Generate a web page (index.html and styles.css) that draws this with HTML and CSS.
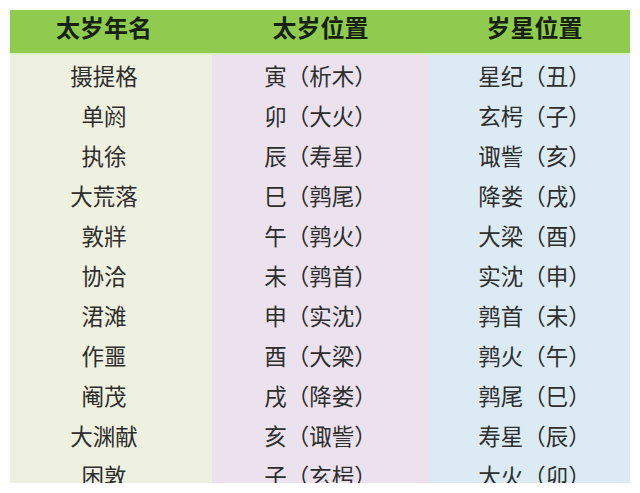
FILE: index.html
```html
<!DOCTYPE html>
<html lang="zh">
<head>
<meta charset="utf-8">
<link rel="stylesheet" href="styles.css">
</head>
<body>
<div class="table">
  <div class="head c1">太岁年名</div>
  <div class="head c2">太岁位置</div>
  <div class="head c3">岁星位置</div>

  <div class="cell c1">摄提格</div><div class="cell c2">寅（析木）</div><div class="cell c3">星纪（丑）</div>
  <div class="cell c1">单阏</div><div class="cell c2">卯（大火）</div><div class="cell c3">玄枵（子）</div>
  <div class="cell c1">执徐</div><div class="cell c2">辰（寿星）</div><div class="cell c3">诹訾（亥）</div>
  <div class="cell c1">大荒落</div><div class="cell c2">巳（鹑尾）</div><div class="cell c3">降娄（戌）</div>
  <div class="cell c1">敦牂</div><div class="cell c2">午（鹑火）</div><div class="cell c3">大梁（酉）</div>
  <div class="cell c1">协洽</div><div class="cell c2">未（鹑首）</div><div class="cell c3">实沈（申）</div>
  <div class="cell c1">涒滩</div><div class="cell c2">申（实沈）</div><div class="cell c3">鹑首（未）</div>
  <div class="cell c1">作噩</div><div class="cell c2">酉（大梁）</div><div class="cell c3">鹑火（午）</div>
  <div class="cell c1">阉茂</div><div class="cell c2">戌（降娄）</div><div class="cell c3">鹑尾（巳）</div>
  <div class="cell c1">大渊献</div><div class="cell c2">亥（诹訾）</div><div class="cell c3">寿星（辰）</div>
  <div class="cell c1">困敦</div><div class="cell c2">子（玄枵）</div><div class="cell c3">大火（卯）</div>
</div>
</body>
</html>
```

FILE: styles.css
```css
html, body {
  margin: 0;
  padding: 0;
  background: #ffffff;
}
body {
  padding: 10px 10px 0 10px;
  font-family: "Noto Sans CJK SC", "Noto Sans", sans-serif;
}
.table {
  width: 620px;
  height: 473px;
  overflow: hidden;
  display: grid;
  grid-template-columns: 202px 217px 201px;
  grid-template-rows: 45px repeat(11, 40px);
}
.head {
  background: #8ecb4f;
  border-bottom: 2px solid #d9efc4;
  color: #17220e;
  font-weight: 700;
  font-size: 24px;
  display: flex;
  align-items: center;
  justify-content: center;
  padding-bottom: 11px;
}
.cell {
  font-size: 22.5px;
  color: #2e2e2e;
  display: flex;
  align-items: center;
  justify-content: center;
  padding-bottom: 1px;
}
.head.c1, .cell.c1 {
  padding-right: 14px;
}
.head.c3 {
  padding-left: 10px;
}
.cell.c3 {
  padding-left: 10px;
}
.cell.c1 { background: #eef1e0; }
.cell.c2 { background: #ebe2ee; }
.cell.c3 { background: #dcebf3; }
```
